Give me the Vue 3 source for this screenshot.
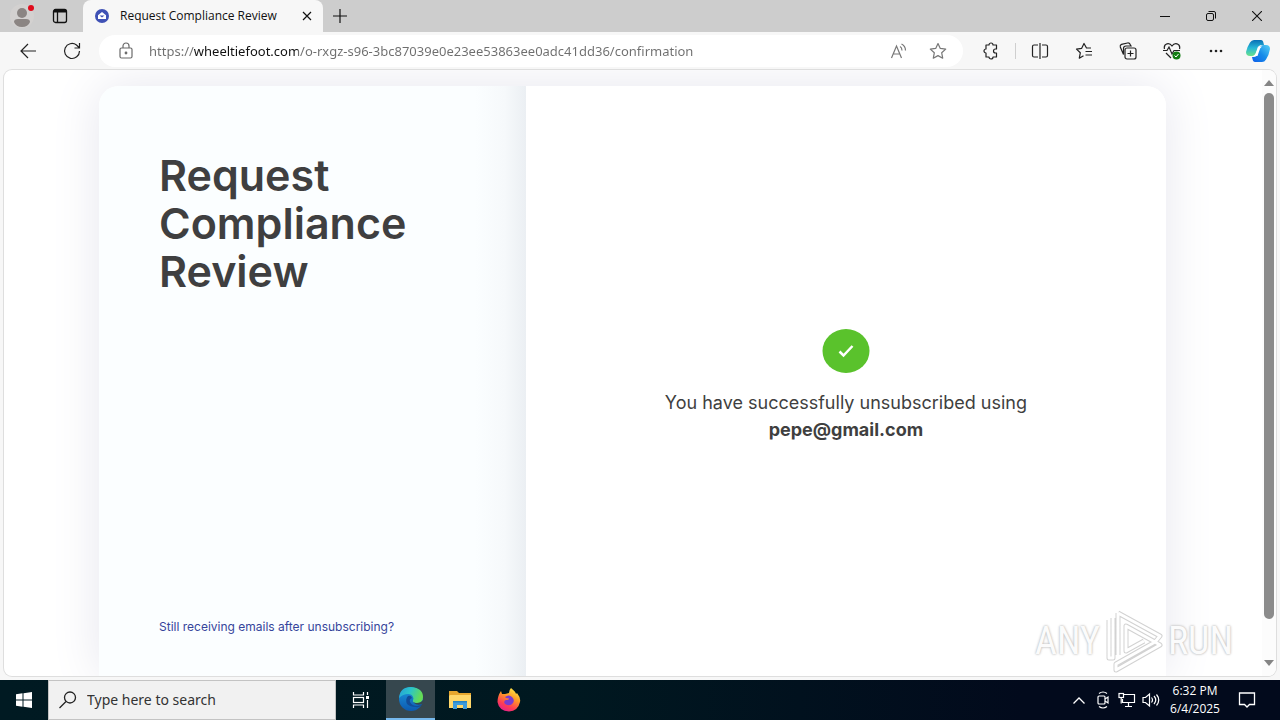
<script setup>
import { ref } from 'vue'

const address = ref('https://wheeltiefoot.com/o-rxgz-s96-3bc87039e0e23ee53863ee0adc41dd36/confirmation')
const search = ref('')
</script>

<template>
  <div class="desktop">
    <header class="tabs">
      <div class="tab-tools">
        <button class="icon" aria-label="Profile">
          <svg width="24" height="26" viewBox="0 0 24 26">
            <circle cx="12" cy="13" r="12" fill="#d3d1d0" />
            <circle cx="12" cy="10" r="5" fill="#8b8583" />
            <path d="M4 19q0-3 4-3h8q4 0 4 3-2 5-8 5t-8-5z" fill="#8b8583" />
            <circle cx="21" cy="5" r="3" fill="#e00b1c" />
          </svg>
        </button>
        <button class="icon" aria-label="Tab actions">
          <svg width="16" height="16" viewBox="0 0 16 16" fill="none" stroke="#111" stroke-width="1.3">
            <rect x="1.5" y="1.5" width="13" height="13" rx="2" />
            <path d="M2 3h12" stroke-width="3" />
            <path d="M5.5 4v10" />
          </svg>
        </button>
      </div>
      <div class="tab">
        <svg width="14" height="14" viewBox="0 0 14 14">
          <circle cx="7" cy="7" r="7" fill="#3f51b5" />
          <path d="M3 6.300 7 3l4 3.300V10H3z" fill="#fff" />
          <path d="M4.500 6.500h5L7 8.500z" fill="#3f51b5" />
        </svg>
        <span class="tab-title">Request Compliance Review</span>
        <button class="icon" aria-label="Close tab">
          <svg width="10" height="10" viewBox="0 0 10 10" stroke="#111" stroke-width="1.2"><path d="M1 1l8 8M9 1 1 9" /></svg>
        </button>
      </div>
      <button class="icon new-tab" aria-label="New tab">
        <svg width="14" height="14" viewBox="0 0 14 14" stroke="#111" stroke-width="1.2"><path d="M7 0v14M0 7h14" /></svg>
      </button>
      <div class="window-buttons">
        <button class="icon" aria-label="Minimize">
          <svg width="10" height="10" viewBox="0 0 10 10" stroke="#111"><path d="M0 5.500h10" /></svg>
        </button>
        <button class="icon" aria-label="Restore">
          <svg width="10" height="10" viewBox="0 0 10 10" fill="none" stroke="#111"><rect x=".5" y="2.500" width="7" height="7" rx="1.500" /><path d="M2.500.5H8Q9.500.5 9.500 2v5.500" /></svg>
        </button>
        <button class="icon" aria-label="Close">
          <svg width="10" height="10" viewBox="0 0 10 10" stroke="#111" stroke-width="1.100"><path d="M0 0l10 10M10 0 0 10" /></svg>
        </button>
      </div>
    </header>

    <nav class="toolbar">
      <div class="nav-buttons">
        <button class="icon" aria-label="Back">
          <svg width="18" height="18" viewBox="0 0 18 18" fill="none" stroke="#222" stroke-width="1.200"><path d="M17 9H2M9 2 2 9l7 7" /></svg>
        </button>
        <button class="icon" aria-label="Refresh">
          <svg width="18" height="18" viewBox="0 0 18 18" fill="none" stroke="#222" stroke-width="1.200"><path d="M16.500 9A7.500 7.500 0 1 1 13.500 3L16 5.500M16.500 1v5h-5" /></svg>
        </button>
      </div>
      <div class="address">
        <svg width="14" height="18" viewBox="0 0 14 18" fill="none" stroke="#6a6a6a" stroke-width="1.200">
          <rect x="1" y="6" width="12" height="10" rx="1.500" /><path d="M4 6V4a3 3 0 0 1 6 0v2" /><circle cx="7" cy="11" r=".8" fill="#6a6a6a" />
        </svg>
        <input v-model="address" class="url" aria-label="Address" spellcheck="false" />
        <button class="icon" aria-label="Read aloud">
          <svg width="18" height="18" viewBox="0 0 18 18" fill="none" stroke="#777" stroke-width="1.200"><path d="M2.500 16 7.500 4l5 12M4.200 12h6.600M11 4.500q2 1 2 4M12.500 2q4 2 4 6.500" /></svg>
        </button>
        <button class="icon" aria-label="Add to favorites">
          <svg width="18" height="18" viewBox="0 0 18 18" fill="none" stroke="#777" stroke-width="1.200" stroke-linejoin="round"><path d="m9 1.500 2.300 4.900 5.400.7-4 3.700 1 5.400L9 13.600l-4.700 2.600 1-5.400-4-3.700 5.400-.7z" /></svg>
        </button>
      </div>
      <div class="actions">
        <button class="icon" aria-label="Extensions">
          <svg width="18" height="18" viewBox="0 0 18 18" fill="none" stroke="#222" stroke-width="1.200" stroke-linejoin="round"><path d="M4 3h3a2 2 0 0 1 4 0h3.500v4h-1a2 2 0 0 0 0 4h1v4H11a2 2 0 0 1-4 0H4v-4a2 2 0 0 1 0-4z" /></svg>
        </button>
        <span class="divider"></span>
        <button class="icon" aria-label="Split screen">
          <svg width="18" height="18" viewBox="0 0 18 18" fill="none" stroke="#222" stroke-width="1.200"><path d="M7 3H3Q1.500 3 1.500 4.500v9Q1.500 15 3 15h4M11 3h4q1.500 0 1.500 1.500v9Q16.500 15 15 15h-4M9 1v16" /></svg>
        </button>
        <button class="icon" aria-label="Favorites">
          <svg width="18" height="18" viewBox="0 0 18 18" fill="none" stroke="#222" stroke-width="1.200" stroke-linejoin="round"><path d="M16 6h-4.500L9 1.500 6.700 6.300l-5.200.8 3.800 3.700-1 5.400 4.200-2.400M10.500 9.500H17M10.500 13H17" /></svg>
        </button>
        <button class="icon" aria-label="Collections">
          <svg width="18" height="18" viewBox="0 0 18 18" fill="none" stroke="#222" stroke-width="1.200"><rect x="6" y="6" width="11" height="11" rx="2" /><path d="M11.500 8.500v6M8.500 11.500h6M4.500 12.500 1.300 5q-.5-2 1.200-2.600L8.500 1q2-.3 2.700 1.500L12 4H7Q4.500 4 4.500 6.500z" /></svg>
        </button>
        <button class="icon" aria-label="Browser essentials">
          <svg width="18" height="18" viewBox="0 0 18 18" fill="none" stroke="#222" stroke-width="1.200"><path d="M1.500 7Q.5 3 4 1.800 7 1 9 4q2-3 5-2.200Q17.500 3 16.500 7M0 8.500h4L6 5l3 7 2-3.500h6M3 11l5 5" /><circle cx="13.500" cy="13.500" r="4" fill="#107c10" stroke="none" /><path d="m11.500 13.500 1.500 1.500 2.500-3" stroke="#fff" stroke-width="1" /></svg>
        </button>
        <button class="icon" aria-label="Settings and more">
          <svg width="18" height="18" viewBox="0 0 18 18" fill="#222"><circle cx="4" cy="9" r="1.300" /><circle cx="9" cy="9" r="1.300" /><circle cx="14" cy="9" r="1.300" /></svg>
        </button>
        <button class="icon copilot" aria-label="Copilot">
          <svg width="24" height="24" viewBox="0 0 24 24">
            <defs>
              <linearGradient id="cpA" x1="0" y1="0" x2="0" y2="1"><stop offset="0" stop-color="#086fb5" /><stop offset=".5" stop-color="#27b7d7" /><stop offset="1" stop-color="#6ae28a" /></linearGradient>
              <linearGradient id="cpB" x1="1" y1="0" x2="0" y2="1"><stop offset="0" stop-color="#57d1f5" /><stop offset=".5" stop-color="#168ce9" /><stop offset="1" stop-color="#0d5dea" /></linearGradient>
            </defs>
            <path d="M8 1h7q2 0 2.500 3l.5 2h-3q-2 0-3 3l-2 5q-1 3-4 3H4q-4 0-4-4Q1 8 4 3.500 5.500 1 8 1z" fill="url(#cpA)" />
            <path d="M16 23H9q-2 0-2.500-3L6 18h2q2.500 0 3.500-3l2-6q1-3 4-3H20q4 0 4 4-1 6-4 10.500-1.500 2.500-4 2.500z" fill="url(#cpB)" />
            <path d="M12 7.500h4q-2 1-3 5L11.500 17H7.500q2-1 3-5z" fill="#fff" />
          </svg>
        </button>
      </div>
    </nav>

    <div class="page">
      <main class="content">
        <article class="card">
          <section class="intro">
            <h1>Request Compliance Review</h1>
            <a href="#">Still receiving emails after unsubscribing?</a>
          </section>
          <section class="result">
            <svg width="48" height="44" viewBox="0 0 48 44"><ellipse cx="24" cy="22" rx="23.500" ry="22" fill="#5ac22c" /><path d="m17.500 22.500 4 4 9-9.500" fill="none" stroke="#fff" stroke-width="2.500" /></svg>
            <p>You have successfully unsubscribed using<br /><strong>pepe@gmail.com</strong></p>
          </section>
        </article>
      </main>
      <div class="scrollbar">
        <svg width="10" height="6" viewBox="0 0 10 6"><path d="M0 6 5 0l5 6z" fill="#858585" /></svg>
        <div class="track"><div class="thumb"></div></div>
        <svg width="10" height="6" viewBox="0 0 10 6"><path d="m0 0 5 6 5-6z" fill="#858585" /></svg>
      </div>
      <div class="watermark">
        <span>ANY</span>
        <svg width="60" height="66" viewBox="0 0 60 66" fill="none" stroke-linejoin="round">
          <g stroke="#d2d2d2" stroke-width="5"><path d="M14 5v42M14 5l42 23-5 6-29-16v25l18-10M5 12v38h4V10M12 56v6l44-25-5-3z" /></g>
          <g stroke="#fff" stroke-width="3"><path d="M14 5v42M14 5l42 23-5 6-29-16v25l18-10M5 12v38h4V10M12 56v6l44-25-5-3z" /></g>
        </svg>
        <span>RUN</span>
      </div>
    </div>

    <footer class="taskbar">
      <button class="icon start" aria-label="Start">
        <svg width="16" height="16" viewBox="0 0 16 16" fill="#fff"><path d="M0 2.200 6.500 1.300v6.200H0zM7.500 1.200 16 0v7.500H7.500zM0 8.500h6.500v6.200L0 13.800zM7.500 8.500H16V16l-8.500-1.200z" /></svg>
      </button>
      <label class="search">
        <svg width="18" height="18" viewBox="0 0 18 18" fill="none" stroke="#222" stroke-width="1.300"><circle cx="11" cy="6.500" r="5.500" /><path d="m7 10.500-6.500 6.500" /></svg>
        <input v-model="search" placeholder="Type here to search" aria-label="Search" />
      </label>
      <button class="icon task-view" aria-label="Task view">
        <svg width="18" height="18" viewBox="0 0 18 18" fill="none" stroke="#fff" stroke-width="1.200"><path d="M1.500 1v3h10V1M1.500 17v-3h10v3M15.500 1v3M15.500 9v8" /><rect x="1.500" y="6.500" width="10" height="5" /><path d="M14 6.500h3" stroke-width="3" /></svg>
      </button>
      <button class="icon app active" aria-label="Microsoft Edge">
        <svg width="24" height="24" viewBox="0 0 24 24">
          <defs>
            <linearGradient id="edA" x1="0" y1="0" x2="1" y2=".3"><stop offset="0" stop-color="#259dd9" /><stop offset=".5" stop-color="#2bc5c9" /><stop offset="1" stop-color="#65dc54" /></linearGradient>
            <linearGradient id="edB" x1="0" y1="0" x2="0" y2="1"><stop offset="0" stop-color="#1c98de" /><stop offset="1" stop-color="#0d5ab0" /></linearGradient>
          </defs>
          <circle cx="12" cy="12" r="12" fill="url(#edB)" />
          <path d="M0 11Q1 0 12 0q12 1 12 10 0 6-6 6-5 0-4-3 1-1 0-3-1-3-5-3-5 0-9 4z" fill="url(#edA)" />
          <path d="M13 11q-3 1-2 4 2 4 7 4 2 0 5-2l-.5 1Q20 21 17 20q-6 0-9-3-2-5 1-8 3-1 4 2z" fill="#124c98" />
          <path d="M14 14q0 2 4 2 4 0 6-3v3l-1 1q-5 2-8-1-1-1-1-2z" fill="#36474e" />
        </svg>
      </button>
      <button class="icon app" aria-label="File Explorer">
        <svg width="22" height="18" viewBox="0 0 22 18"><path d="M0 0h8l2 2h12v15H0z" fill="#e7a72e" /><path d="M1 4h21v13H0V5z" fill="#ffd76a" /><path d="M4 18v-8h14v8h-4v-4H8v4z" fill="#3d9bdc" /><path d="M4 10h14v1.500H4z" fill="#2583c4" /></svg>
      </button>
      <button class="icon app" aria-label="Firefox">
        <svg width="24" height="24" viewBox="0 0 24 24">
          <defs><linearGradient id="ffA" x1=".8" y1="0" x2=".3" y2="1"><stop offset="0" stop-color="#fff04a" /><stop offset=".4" stop-color="#ff9a26" /><stop offset=".75" stop-color="#ff3c54" /><stop offset="1" stop-color="#e5208d" /></linearGradient></defs>
          <path d="M14 0q5 4 5 6l1-1q4 5 3 9-2 9-11 9.500Q2 23 .5 14 .5 8 4 3l1 3 3 0 4-1q0-3 2-5z" fill="url(#ffA)" />
          <path d="M8 9q4-3 7 0 3 3 1 6-3 4-8 1-2-3 1-4 3 0 3-1.500L9 10z" fill="#7a3bd0" />
        </svg>
      </button>
      <div class="tray">
        <button class="icon" aria-label="Show hidden icons"><svg width="12" height="7" viewBox="0 0 12 7" fill="none" stroke="#fff" stroke-width="1.300"><path d="m.5 6.500 5.500-5.500 5.500 5.500" /></svg></button>
        <button class="icon" aria-label="Meet now"><svg width="14" height="18" viewBox="0 0 14 18" fill="none" stroke="#fff" stroke-width="1.200"><rect x="2" y="5" width="7" height="8" rx="1" /><path d="m9 8 3-2v6l-3-2M3 2.500q4-3 8 0M3 15.500q4 3 8 0" /></svg></button>
        <button class="icon" aria-label="Network"><svg width="18" height="16" viewBox="0 0 18 16" fill="none" stroke="#fff" stroke-width="1.200"><path d="M6 2.500h10.500v8H4.500V7M10.500 10.500V14M7 14.500h7" /><rect x="1" y="1.500" width="4.500" height="4" /><path d="M3.200 5.500v6" /></svg></button>
        <button class="icon" aria-label="Volume"><svg width="18" height="16" viewBox="0 0 18 16" fill="none" stroke="#fff" stroke-width="1.200"><path d="M1 5.500h2.500L7.500 2v12L3.500 10.500H1zM9.500 5.500q2 2.500 0 5M12 4q3.500 4 0 8M14.500 2.500q4.500 5.500 0 11" /></svg></button>
        <time class="clock"><span>6:32 PM</span><span>6/4/2025</span></time>
        <button class="icon" aria-label="Notifications"><svg width="18" height="18" viewBox="0 0 18 18" fill="none" stroke="#fff" stroke-width="1.300"><path d="M1.500 2h15v11.500h-5L9 16l-2.500-2.500h-5z" /></svg></button>
      </div>
    </footer>
  </div>
</template>

<style>
body {
  margin: 0;
}
</style>

<style scoped>
* {
  box-sizing: border-box;
}
.desktop {
  height: 100vh;
  display: flex;
  flex-direction: column;
  overflow: hidden;
  background: #f7f7f7;
  color: #111;
  font: 12px/16px "Open Sans", "Noto Sans", sans-serif;
}
svg {
  display: block;
  flex: none;
}
.icon {
  display: flex;
  align-items: center;
  justify-content: center;
  flex: none;
  padding: 0;
  border: 0;
  background: none;
}
.tabs {
  display: flex;
  height: 32px;
  flex: none;
  background: #cdcdcd;
}
.tab-tools {
  display: flex;
  align-items: center;
  gap: 18px;
  width: 83px;
  padding-left: 10px;
}
.tab {
  display: flex;
  align-items: center;
  width: 240px;
  padding: 0 11px 0 12px;
  gap: 11px;
  background: #f7f7f7;
  border-radius: 8px 8px 0 0;
}
.tab-title {
  flex: 1;
  white-space: nowrap;
}
.new-tab {
  width: 34px;
}
.window-buttons {
  display: flex;
  margin-left: auto;
}
.window-buttons .icon {
  width: 46px;
}
.toolbar {
  display: flex;
  align-items: center;
  height: 38px;
  flex: none;
}
.nav-buttons {
  display: flex;
  gap: 26px;
  width: 99px;
  padding-left: 19px;
}
.address {
  display: flex;
  flex: 1;
  align-items: center;
  height: 32px;
  padding: 0 16px 0 20px;
  border-radius: 16px;
  background: #fff;
}
.url {
  flex: 1;
  min-width: 0;
  margin: 0 20px 0 16px;
  padding: 0;
  border: 0;
  outline: 0;
  font: 13px/20px "Noto Sans", "Open Sans", sans-serif;
  color: transparent;
  background: linear-gradient(90deg, #6e6e6e 45px, #111 45px, #111 149px, #6e6e6e 149px);
  -webkit-background-clip: text;
  background-clip: text;
}
.address .icon + .icon {
  margin-left: 22px;
}
.actions {
  display: flex;
  align-items: center;
  gap: 26px;
  padding: 0 10px 0 19px;
}
.divider {
  width: 1px;
  height: 16px;
  margin: 0 -11px;
  background: #cfcfcf;
}
.copilot {
  margin-left: -5px;
}
.page {
  position: relative;
  display: flex;
  flex: 1;
  min-height: 0;
  margin: 0 4px 4px;
  overflow: hidden;
  background: #fff;
  border-radius: 8px;
  box-shadow: 0 0 0 1px #dedede;
}
.content {
  flex: 1;
  display: flex;
  overflow: hidden;
  padding: 16px 96px 0 95px;
  font-family: Inter, "Liberation Sans", sans-serif;
  color: #3f3f40;
}
.card {
  display: flex;
  flex: 1;
  border-radius: 20px 20px 0 0;
  box-shadow: 0 0 50px #e6e6ee;
}
.intro {
  width: 40%;
  display: flex;
  flex-direction: column;
  justify-content: space-between;
  align-items: flex-start;
  padding: 65px 60px 41px;
  border-radius: 20px 0 0 0;
  background: linear-gradient(90deg, #fbfeff 88%, #f6f9fb 95%, #ebeff3);
}
h1 {
  margin: 0;
  font-size: 43px;
  line-height: 48px;
  font-weight: 600;
}
a {
  color: #36459b;
  text-decoration: none;
  white-space: nowrap;
}
.result {
  flex: 1;
  display: flex;
  flex-direction: column;
  align-items: center;
  justify-content: center;
  gap: 16px;
  padding-top: 10px;
  border-radius: 0 20px 0 0;
  background: #fff;
}
p {
  margin: 0;
  font-size: 18px;
  line-height: 27px;
  text-align: center;
}
.scrollbar {
  display: flex;
  flex-direction: column;
  align-items: center;
  width: 14px;
  padding: 10px 0;
  gap: 7px;
  background: #fcfcfc;
}
.track {
  flex: 1;
  width: 10px;
}
.thumb {
  height: 94%;
  border-radius: 5px;
  background: #8b8b8b;
}
.watermark {
  position: absolute;
  right: 43px;
  bottom: 2px;
  display: flex;
  align-items: center;
  gap: 4px;
  pointer-events: none;
  color: #fbfbfb;
  font: 38px/48px "Liberation Sans Narrow", "Roboto Condensed", "Liberation Sans", sans-serif;
  text-shadow: 0 0 2px #bbb, 0 0 3px #ccc;
}
.taskbar {
  display: flex;
  height: 40px;
  flex: none;
  background: linear-gradient(90deg, #001a22, #001820 45%, #020a1c 80%);
  color: #fff;
}
.start {
  width: 48px;
}
.search {
  display: flex;
  align-items: center;
  gap: 10px;
  width: 288px;
  padding: 0 12px 0 10px;
  background: #f1f1f1;
  border: 1px solid #c3c3c3;
}
.search input {
  flex: 1;
  min-width: 0;
  padding: 0;
  border: 0;
  outline: 0;
  background: none;
  font: 14px/20px "Noto Sans", "Open Sans", sans-serif;
}
.search input::placeholder {
  color: #333;
}
.task-view {
  width: 50px;
}
.app {
  width: 49px;
}
.active {
  background: #36474e;
  border-bottom: 2px solid #76b9ed;
}
.tray {
  display: flex;
  align-items: center;
  margin-left: auto;
  padding-right: 21px;
}
.tray .icon {
  width: 24px;
}
.clock {
  display: flex;
  flex-direction: column;
  align-items: center;
  width: 64px;
  margin-right: 8px;
  line-height: 18px;
}
</style>
